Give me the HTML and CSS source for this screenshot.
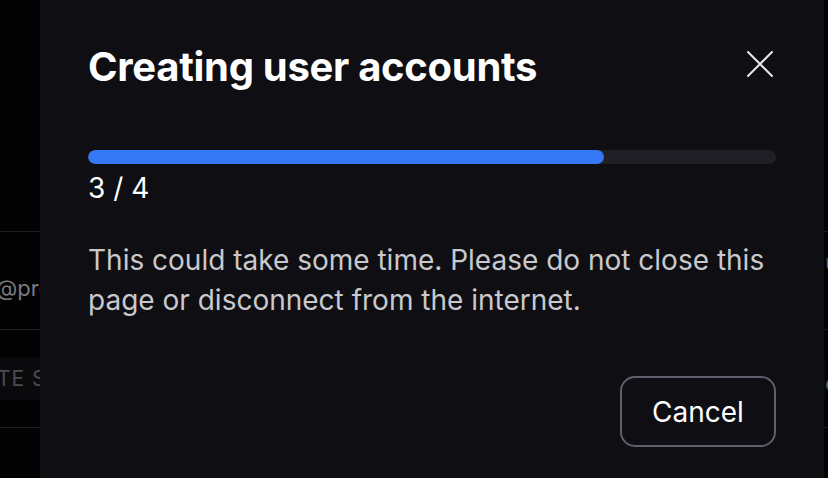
FILE: index.html
```html
<!DOCTYPE html>
<html lang="en">
<head>
<meta charset="utf-8">
<title>Creating user accounts</title>
<link rel="stylesheet" href="styles.css">
</head>
<body>
<div class="page">
  <div class="table">
    <div class="row row-head"></div>
    <div class="row">
      <div class="cell cell-left"><span class="email">@proton.me</span></div>
      <div class="cell cell-right"><span class="name">user</span></div>
    </div>
    <div class="row">
      <div class="cell cell-left"><span class="badge">TE SETUP</span></div>
      <div class="cell cell-right"><span class="name name-low">c</span></div>
    </div>
    <div class="row"></div>
  </div>

  <div class="modal" role="dialog" aria-labelledby="modal-title">
    <div class="modal-header">
      <h2 id="modal-title" class="modal-title">Creating user accounts</h2>
      <button class="close" aria-label="Close">
        <svg width="26" height="26" viewBox="0 0 26 26" fill="none" stroke="currentColor" stroke-width="2" stroke-linecap="round">
          <path d="M1 1L25 25M25 1L1 25"/>
        </svg>
      </button>
    </div>
    <div class="progress"><div class="progress-fill" style="width:75%"></div></div>
    <div class="progress-count">3 / 4</div>
    <p class="modal-text">This could take some time. Please do not close this page or disconnect from the internet.</p>
    <div class="modal-footer">
      <button class="btn">Cancel</button>
    </div>
  </div>
</div>
</body>
</html>
```
FILE: styles.css
```css
* { box-sizing: border-box; }
html, body { margin: 0; padding: 0; }
body {
  background: #020203;
  font-family: Inter, "Noto Sans", sans-serif;
  width: 828px;
  height: 478px;
  overflow: hidden;
}
.page { position: relative; width: 828px; height: 478px; overflow: hidden; }

.table { display: flex; flex-direction: column; }
.row {
  height: 98px;
  border-bottom: 1px solid #1b1b22;
  display: grid;
  grid-template-columns: 825px 3px;
  align-items: start;
}
.row-head { height: 232px; }
.cell { overflow: hidden; white-space: nowrap; }
.email {
  display: block;
  font-size: 22px;
  line-height: 27px;
  color: #7a7a80;
  margin-top: 43px;
  margin-left: -4px;
}
.name {
  display: block;
  font-size: 22px;
  line-height: 27px;
  color: #5a5a60;
  margin-top: 17px;
}
.name-low { margin-top: 40px; }
.badge {
  display: block;
  background: #0a0a0d;
  height: 43px;
  line-height: 43px;
  font-size: 21px;
  letter-spacing: 1px;
  text-indent: -3px;
  color: #4b4b50;
  margin-top: 27px;
}

.modal {
  position: absolute;
  left: 40px;
  top: 0;
  width: 784px;
  height: 478px;
  background: #0e0e13;
  padding: 43px 48px 0 48px;
  color: #fff;
}
.modal-header {
  display: flex;
  align-items: flex-start;
  justify-content: space-between;
}
.modal-title {
  margin: 0;
  font-size: 40px;
  line-height: 48px;
  font-weight: 700;
  letter-spacing: -0.3px;
}
.close {
  background: none;
  border: 0;
  padding: 0;
  margin-top: 8px;
  margin-right: 3px;
  color: #e8e8ea;
  width: 26px;
  height: 26px;
  display: flex;
}
.progress {
  margin-top: 59px;
  height: 14px;
  border-radius: 7px;
  background: #1f1f25;
  overflow: hidden;
}
.progress-fill { height: 100%; background: #3478f6; border-radius: 7px; }
.progress-count {
  font-size: 28px;
  line-height: 40px;
  margin-top: 4px;
}
.modal-text {
  margin: 32px 0 0 0;
  font-size: 28px;
  line-height: 40px;
  color: #c9c9cd;
}
.modal-footer {
  display: flex;
  justify-content: flex-end;
  margin-top: 56px;
}
.btn {
  font-family: Inter, "Noto Sans", sans-serif;
  background: transparent;
  color: #fff;
  font-size: 28px;
  height: 71px;
  width: 156px;
  border: 2px solid #5b606b;
  border-radius: 15px;
}
```
